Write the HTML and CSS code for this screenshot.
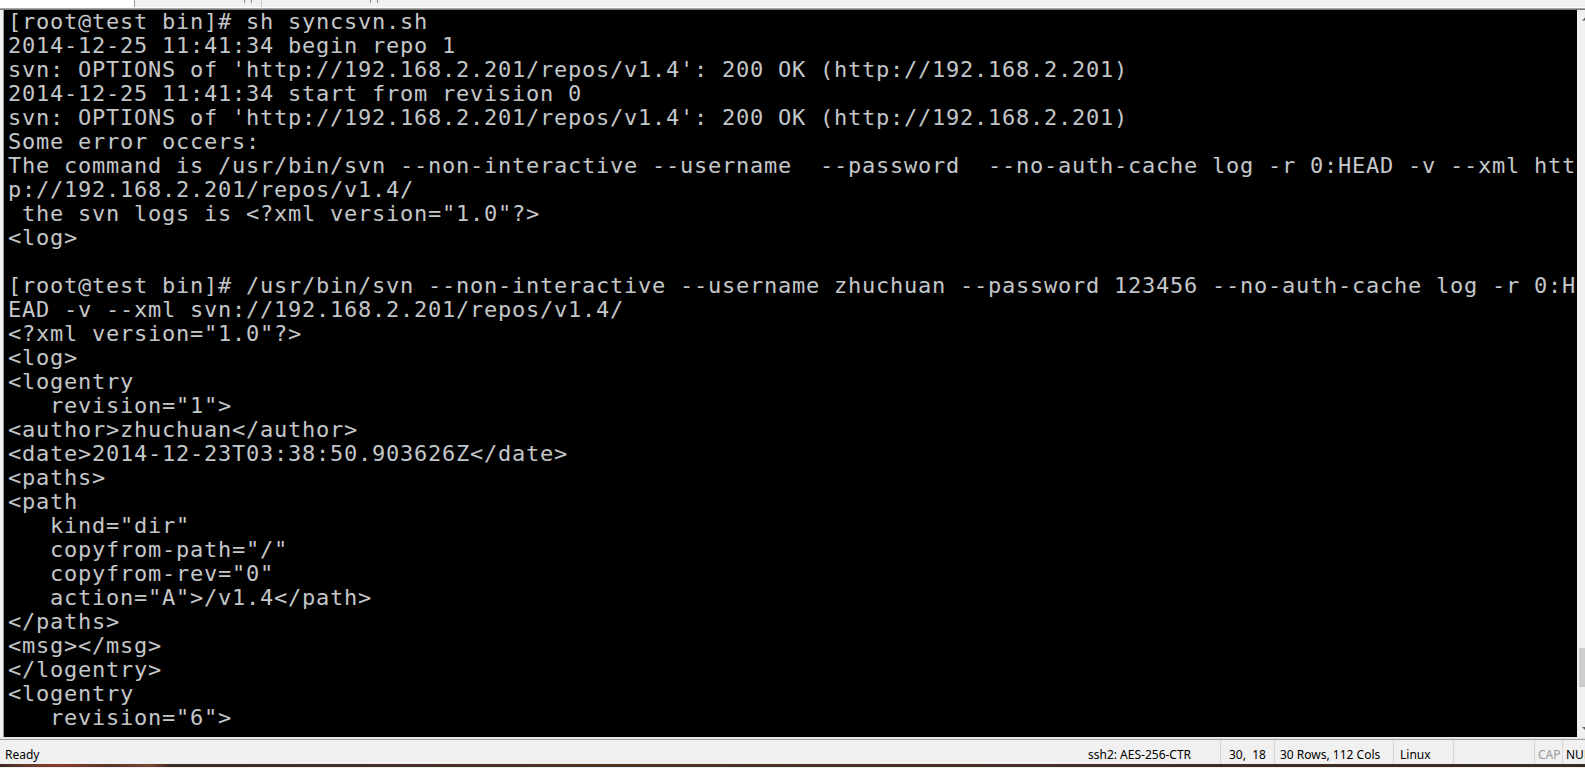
FILE: index.html
```html
<!DOCTYPE html>
<html>
<head>
<meta charset="utf-8">
<title>SecureCRT - test</title>
<link rel="stylesheet" href="styles.css">
</head>
<body>
<div class="window">
  <div class="tabbar">
    <div class="tab tab-active"></div>
    <div class="tab tab-2"><span class="close"></span></div>
    <div class="tab tab-3"><span class="close"></span></div>
  </div>
  <div class="main">
    <div class="terminal">
<div class="row">[root@test bin]# sh syncsvn.sh</div>
<div class="row">2014-12-25 11:41:34 begin repo 1</div>
<div class="row">svn: OPTIONS of 'http://192.168.2.201/repos/v1.4': 200 OK (http://192.168.2.201)</div>
<div class="row">2014-12-25 11:41:34 start from revision 0</div>
<div class="row">svn: OPTIONS of 'http://192.168.2.201/repos/v1.4': 200 OK (http://192.168.2.201)</div>
<div class="row">Some error occers:</div>
<div class="row">The command is /usr/bin/svn --non-interactive --username  --password  --no-auth-cache log -r 0:HEAD -v --xml htt</div>
<div class="row">p://192.168.2.201/repos/v1.4/</div>
<div class="row"> the svn logs is &lt;?xml version="1.0"?&gt;</div>
<div class="row">&lt;log&gt;</div>
<div class="row"> </div>
<div class="row">[root@test bin]# /usr/bin/svn --non-interactive --username zhuchuan --password 123456 --no-auth-cache log -r 0:H</div>
<div class="row">EAD -v --xml svn://192.168.2.201/repos/v1.4/</div>
<div class="row">&lt;?xml version="1.0"?&gt;</div>
<div class="row">&lt;log&gt;</div>
<div class="row">&lt;logentry</div>
<div class="row">   revision="1"&gt;</div>
<div class="row">&lt;author&gt;zhuchuan&lt;/author&gt;</div>
<div class="row">&lt;date&gt;2014-12-23T03:38:50.903626Z&lt;/date&gt;</div>
<div class="row">&lt;paths&gt;</div>
<div class="row">&lt;path</div>
<div class="row">   kind="dir"</div>
<div class="row">   copyfrom-path="/"</div>
<div class="row">   copyfrom-rev="0"</div>
<div class="row">   action="A"&gt;/v1.4&lt;/path&gt;</div>
<div class="row">&lt;/paths&gt;</div>
<div class="row">&lt;msg&gt;&lt;/msg&gt;</div>
<div class="row">&lt;/logentry&gt;</div>
<div class="row">&lt;logentry</div>
<div class="row">   revision="6"&gt;</div>
    </div>
    <div class="scrollbar">
      <div class="sb-btn">
        <svg class="sb-arrow" width="17" height="17" viewBox="0 0 17 17"><path d="M5 10.5 L8.5 7 L12 10.5 Z" fill="#606060"/></svg>
      </div>
      <div class="sb-track"><div class="sb-thumb"></div></div>
      <div class="sb-btn">
        <svg class="sb-arrow" width="17" height="17" viewBox="0 0 17 17"><path d="M5 7 L8.5 10.5 L12 7 Z" fill="#606060"/></svg>
      </div>
    </div>
  </div>
  <div class="statusbar">
    <div class="pane pane-ready">Ready</div>
    <div class="pane pane-ssh">ssh2: AES-256-CTR</div>
    <div class="pane pane-pos">30,  18</div>
    <div class="pane pane-size">30 Rows, 112 Cols</div>
    <div class="pane pane-os">Linux</div>
    <div class="pane pane-empty"></div>
    <div class="pane pane-cap">CAP</div>
    <div class="pane pane-num">NUM</div>
  </div>
  <div class="desktop"></div>
</div>
</body>
</html>
```
FILE: styles.css
```css
html, body {
  margin: 0;
  padding: 0;
  width: 1585px;
  height: 768px;
  overflow: hidden;
  background: #f0f0f0;
}

.window {
  width: 1594px;
  height: 768px;
  display: flex;
  flex-direction: column;
  background: #f0f0f0;
}

/* ---- tab strip (mostly scrolled off) ---- */
.tabbar {
  height: 7px;
  display: flex;
  border-bottom: 1px solid #ffffff;
  background: #f0f0f0;
  flex: none;
}
.tab {
  height: 7px;
  position: relative;
}
.tab-active {
  width: 134px;
  background: #ffffff;
  border-right: 1px solid #9a9a9a;
}
.tab-2 {
  width: 126px;
  border-right: 1px solid #c8c8c8;
}
.tab-3 {
  width: 126px;
}
.close {
  position: absolute;
  top: 0;
  width: 6px;
  height: 3px;
  border-left: 1px solid #8a8a8a;
  border-right: 1px solid #8a8a8a;
}
.tab-2 .close { left: 109px; }
.tab-3 .close { left: 108px; }

/* ---- main area ---- */
.main {
  flex: none;
  display: flex;
  height: 727px;
  border-top: 1px solid #a8a8a8;
  border-bottom: 2px solid #e6e6e6;
  padding-top: 1px;
  background: #7a7a7a;
}
.terminal {
  flex: none;
  width: 1569px;
  height: 727px;
  margin-left: 3px;
  border-left: 1px solid #a0a0a0;
  padding-left: 4px;
  background: #000000;
  color: #c4c6c8;
  font-family: "DejaVu Sans Mono", monospace;
  font-size: 22px;
  letter-spacing: 0.755px;
  overflow: hidden;
  box-shadow: -3px 0 0 #f0f0f0;
}
.row {
  height: 24px;
  line-height: 24px;
  white-space: pre;
}

.scrollbar {
  flex: none;
  width: 17px;
  height: 727px;
  background: #f0f0f0;
  display: flex;
  flex-direction: column;
}
.sb-btn {
  height: 17px;
  flex: none;
}
.sb-arrow {
  display: block;
}
.sb-track {
  flex: 1;
  position: relative;
}
.sb-thumb {
  position: absolute;
  left: 2px;
  right: 2px;
  top: 621px;
  height: 39px;
  background: #cdcdcd;
}

/* ---- status bar ---- */
.statusbar {
  flex: none;
  display: flex;
  height: 24px;
  border-top: 1px solid #a0a0a0;
  background: #f0f0f0;
  font-family: "Noto Sans", "Open Sans", sans-serif;
  font-size: 12px;
  color: #000000;
}
.pane {
  flex: none;
  box-sizing: border-box;
  height: 24px;
  line-height: 20px;
  padding-top: 5px;
  white-space: pre;
  border-right: 1px solid #d6d6d6;
  overflow: hidden;
}
.pane-ready {
  flex: 1;
  padding-left: 5px;
  border-right: none;
}
.pane-ssh {
  width: 137px;
  padding-left: 4px;
}
.pane-pos {
  width: 54px;
  padding-left: 8px;
}
.pane-size {
  width: 119px;
  padding-left: 5px;
}
.pane-os {
  width: 60px;
  padding-left: 6px;
}
.pane-empty {
  width: 81px;
}
.pane-cap {
  width: 28px;
  padding-left: 3px;
  color: #9a9a9a;
}
.pane-num {
  width: 31px;
  padding-left: 3px;
  border-right: none;
}

.desktop {
  flex: none;
  height: 3px;
  background: linear-gradient(90deg, #3a2a22 0px, #6b3a2e 30px, #8a3b30 60px, #5a3428 110px, #7a4536 150px, #3d2c22 170px, #4a3426 600px, #3b2a20 1585px);
}
```
